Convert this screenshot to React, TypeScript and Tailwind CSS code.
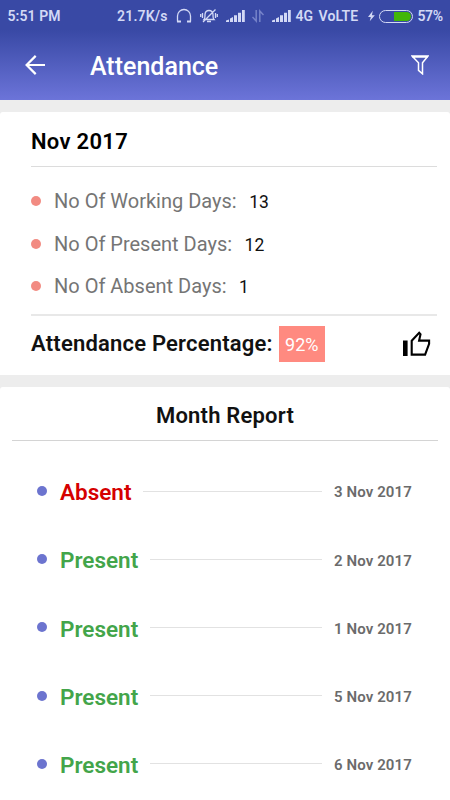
import React from "react";

const stats = [
  { label: "No Of Working Days:", value: "13" },
  { label: "No Of Present Days:", value: "12" },
  { label: "No Of Absent Days:", value: "1" },
];

const report = [
  { status: "Absent", date: "3 Nov 2017" },
  { status: "Present", date: "2 Nov 2017" },
  { status: "Present", date: "1 Nov 2017" },
  { status: "Present", date: "5 Nov 2017" },
  { status: "Present", date: "6 Nov 2017" },
];

function Signal({ className }: { className: string }) {
  return (
    <svg className={className} width="19" height="14" viewBox="0 0 19 14" fill="#d3d9f5">
      <path d="M0 13v-1.5L3 10.500v2.500zM4 13V9.500L7 8v5zM8 6.300h3V13H8zM12 3.700h3V13h-3zM16 1h2.800V13H16z" />
    </svg>
  );
}

function StatusBar() {
  return (
    <div className="flex h-8 items-center pl-[7.500px] text-[14px] font-semibold leading-none text-[#d3d9f5]">
      <span className="w-[109.500px] tracking-[0.1px]">5:51 PM</span>
      <span className="w-[58.500px] tracking-[0.2px]">21.7K/s</span>
      <svg className="shrink-0" width="16" height="16" viewBox="0 0 16 16" fill="none" stroke="#d3d9f5" strokeWidth="1.300">
        <path d="M1.5 13.5V8a6.500 6.500 0 0 1 13 0v5.500" />
        <path d="M1 13.5h4M11 13.5h4" strokeWidth="2" />
      </svg>
      <svg className="ml-2 shrink-0" width="18" height="16" viewBox="0 0 18 16" fill="none" stroke="#d3d9f5" strokeWidth="1.3">
        <path d="M4 11.5c1.3-1.4.9-3.3 1-5C5.2 3.8 7 2.5 9 2.5s3.8 1.3 4 4c.1 1.700-.3 3.600 1 5zM7 13.500h4M3 14 15.500 1.500M2.500 5v5M15.500 5v5M.7 6v3M17.300 6v3" />
      </svg>
      <Signal className="ml-2 shrink-0" />
      <svg className="ml-[7px] shrink-0" width="12" height="14" viewBox="0 0 12 14" fill="none" stroke="#7683c9" strokeWidth="1.5">
        <path d="M.5 8 4.200 12V1M11.500 6 7.800 2v11" />
      </svg>
      <Signal className="ml-[8px] shrink-0" />
      <span className="ml-[5px] w-[23px]">4G</span>
      <span className="w-[49px] whitespace-nowrap tracking-[0.1px]">VoLTE</span>
      <svg className="shrink-0" width="7" height="12" viewBox="0 0 8 12" fill="#d3d9f5">
        <path d="M5.500 0 0 7h3.200L2 12l5.800-7H4.500z" />
      </svg>
      <span className="ml-[4px] flex h-[13px] w-[34px] shrink-0 justify-end rounded-full border border-[#d3d9f5] p-px">
        <span className="w-[17px] rounded-r-full bg-[#42b609]" />
      </span>
      <span className="ml-[5px] text-[14px] tracking-[-0.400px]">57%</span>
    </div>
  );
}

export default function App() {
  return (
    <div className="h-[800px] w-[450px] overflow-hidden bg-[#ededed] font-[Roboto,sans-serif]">
      <header className="h-[100px] bg-linear-to-b from-[#3949a5] from-30% to-[#6c74d9]">
        <StatusBar />
        <div className="flex h-[68px] items-center pl-[25px] pr-[21px] text-white">
          <svg className="shrink-0 -translate-y-px" width="20" height="20" viewBox="0 0 20 20" fill="none" stroke="white" strokeWidth="2.200">
            <path d="M20 10H2M10.700 .900 1.600 10l9.100 9.100" />
          </svg>
          <h1 className="ml-[45px] pt-[2px] text-[25px] font-medium leading-8">Attendance</h1>
          <svg className="ml-auto -translate-y-px" width="18" height="20" viewBox="0 0 18 20" fill="none" stroke="white" strokeWidth="1.500">
            <path d="M1 1h16L11.500 7.800v11l-4-3.500V7.800zM1 2h16" />
          </svg>
        </div>
      </header>

      <section className="mt-3 h-[263px] rounded-t-[3px] bg-white pl-[31px] pr-[13px]">
        <h2 className="h-[55px] border-b border-[#dcdcdc] pt-[14px] text-[22px] font-semibold leading-8 tracking-[0.300px] text-black">Nov 2017</h2>
        <ul className="h-[147px] pt-[13px]">
          {stats.map((s) => (
            <li key={s.label} className="flex h-[42.500px] items-center">
              <span className="h-[10px] w-[10px] rounded-full bg-[#f28b82]" />
              <span className="ml-[13px] text-[20px] text-[#757575]">{s.label}</span>
              <span className="ml-[12.500px] pt-[2px] text-[17.500px] text-[#111]">{s.value}</span>
            </li>
          ))}
        </ul>
        <div className="flex h-[60px] items-center border-t-2 border-[#e8e8e8] pb-[3px]">
          <span className="whitespace-nowrap text-[22px] font-semibold tracking-[0.200px] text-[#111]">Attendance Percentage:</span>
          <span className="ml-[6px] flex h-9 w-[46px] shrink-0 items-center justify-center bg-[#ff8a80] pt-[2px] text-[18px] text-white">92%</span>
          <svg className="ml-auto mr-[6px]" width="29" height="26" viewBox="0 0 29 26" fill="none" stroke="black" strokeWidth="2.100">
            <path d="M1 9.500h4.600V25H1z" fill="black" stroke="none" />
            <path d="M9.700 9.800 17.200 1.900l1.300 1.400-1.400 6.300h10v3.200l-4 10.800H9.700z" />
          </svg>
        </div>
      </section>

      <section className="mt-3 h-[413px] rounded-t-[3px] bg-white px-3">
        <h2 className="h-[54px] border-b border-[#d4d4d4] pt-[13px] text-center text-[22px] font-semibold leading-8 tracking-[0.200px] text-[#111]">Month Report</h2>
        <ul className="pl-[25px] pr-[26px] pt-[16px]">
          {report.map((r) => (
            <li key={r.date} className="flex h-[68.200px] items-center">
              <span className="h-[10px] w-[10px] rounded-full bg-[#6c74cf]" />
              <span className={`ml-[13px] pt-[4px] text-[22.500px] font-semibold ${r.status === "Absent" ? "text-[#d50000]" : "text-[#43a54a]"}`}>{r.status}</span>
              <span className="ml-[12px] mr-[12px] h-px flex-1 bg-[#e2e2e2]" />
              <span className="w-[78px] whitespace-nowrap pt-[3px] text-[15px] font-semibold tracking-[0.100px] text-[#6b6b6b]">{r.date}</span>
            </li>
          ))}
        </ul>
      </section>
    </div>
  );
}
